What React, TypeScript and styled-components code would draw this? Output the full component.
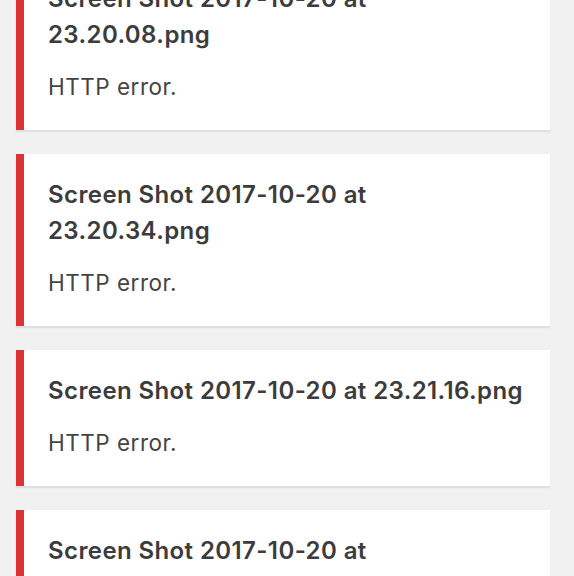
import React from "react";
import styled, { createGlobalStyle } from "styled-components";

const Global = createGlobalStyle`
  html, body { margin: 0; padding: 0; background: #f1f1f1; overflow: hidden; }
  body { font-family: Inter, "Noto Sans", "Liberation Sans", sans-serif; color: #444; }
`;

const List = styled.div`
  display: flex;
  flex-direction: column;
  gap: 24px;
  margin-top: -42px;
  padding: 0 24px 0 16px;
`;

const Card = styled.div`
  background: #fff;
  border-left: 8px solid #dc3232;
  box-shadow: 0 2px 1px rgba(0, 0, 0, 0.07);
  padding: 23px 24px 28px 24px;
  display: flex;
  flex-direction: column;
  gap: 19px;
`;

const Title = styled.div`
  font-size: 24px;
  line-height: 36px;
  letter-spacing: 0.4px;
  font-weight: 600;
  color: #3c3c3c;
`;

const Message = styled.div`
  font-size: 22.5px;
  line-height: 30px;
  letter-spacing: 0.5px;
  font-weight: 400;
  color: #444;
`;

const items = [
  "Screen Shot 2017-10-20 at 23.20.08.png",
  "Screen Shot 2017-10-20 at 23.20.34.png",
  "Screen Shot 2017-10-20 at 23.21.16.png",
  "Screen Shot 2017-10-20 at 23.21.40.png",
];

export default function App() {
  return (
    <>
      <Global />
      <List>
        {items.map((name) => (
          <Card key={name}>
            <Title>{name}</Title>
            <Message>HTTP error.</Message>
          </Card>
        ))}
      </List>
    </>
  );
}
